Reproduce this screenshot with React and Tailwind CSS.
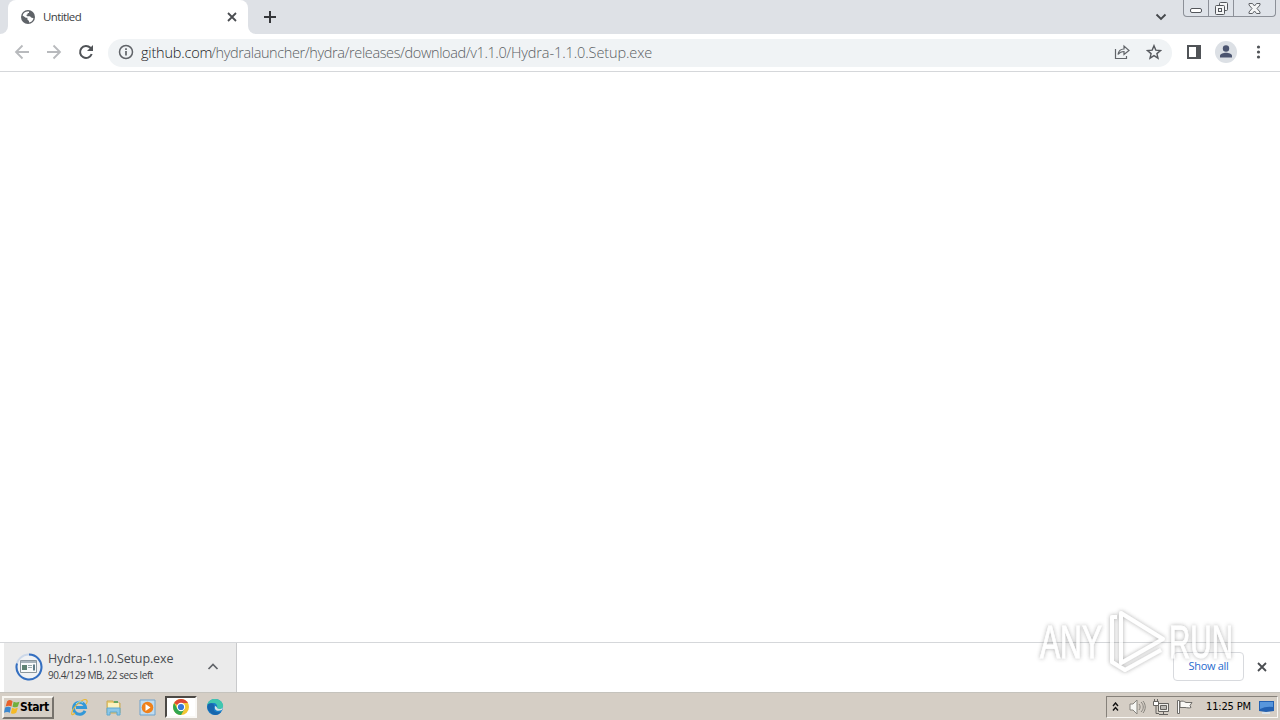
import React from "react";

const Globe = () => (
  <svg className="h-4 w-4" viewBox="0 0 16 16">
    <circle cx="8" cy="8" r="7" fill="#5f6368" />
    <path d="M9 2.600C6 2 3.300 3.800 2.600 6.400l3.200 2.400h1.600v1.700l1.600 1.600v1.400c2.300-.3 4.100-2 4.500-4.300l-2.400-.6-1.100-1.400H7.200L6.200 6l1.500-.8V4H9Z" fill="#fff" />
  </svg>
);

const Cross = () => (
  <svg className="h-3 w-3 shrink-0" viewBox="0 0 12 12" fill="none" stroke="#4a4d51" strokeWidth="1.8">
    <path d="m2 2 8 8M10 2l-8 8" />
  </svg>
);

function TabStrip() {
  return (
    <div className="flex h-[34px] bg-[#dee1e6]">
      <div className="w-2 bg-white"><div className="h-full rounded-br-lg bg-[#dee1e6]" /></div>
      <div className="flex w-[240px] items-center rounded-t-lg bg-white pr-[10px] pl-3">
        <Globe />
        <span className="ml-[7px] flex-1 text-[11.5px] tracking-[-0.6px] text-[#3c4043]">Untitled</span>
        <Cross />
      </div>
      <div className="w-2 bg-white"><div className="h-full rounded-bl-lg bg-[#dee1e6]" /></div>
      <svg className="mt-[11px] ml-2 h-3 w-3" viewBox="0 0 12 12" stroke="#35363a" strokeWidth="2"><path d="M6 0v12M0 6h12" /></svg>
      <svg className="mt-[13px] ml-auto h-2 w-3" viewBox="0 0 12 8" fill="none" stroke="#45484c" strokeWidth="1.9"><path d="m1.500 1.500 4.500 4.500 4.500-4.500" /></svg>
      <div className="mr-1 ml-4 flex h-[17px] w-[93px] rounded-b-[4px] border border-t-0 border-[#8c9098] bg-[#dfe3e9]">
        <div className="flex w-[25px] justify-center border-r border-[#8c9098] pt-2">
          <svg className="h-[5px] w-3" viewBox="0 0 12 5"><rect x=".5" y=".5" width="11" height="4" rx="1.500" fill="#fff" stroke="#53565b" /></svg>
        </div>
        <div className="flex w-[25px] justify-center border-r border-[#8c9098] pt-[2px]">
          <svg className="h-[13px] w-[13px]" viewBox="0 0 13 13" fill="#f4f5f6" stroke="#53565b">
            <rect x="4.500" y=".5" width="8" height="8" rx="1" /><rect x=".5" y="3.500" width="9" height="9" rx="1" /><rect x="3.500" y="6.500" width="3" height="3" />
          </svg>
        </div>
        <div className="flex flex-1 justify-center pt-[3px]">
          <svg className="h-[11px] w-[13px]" viewBox="0 0 13 11"><path d="M1 .5h3.500l2 2.500 2-2.500H12v1.500L9 5.500l3 3.500v1.500H8.500l-2-2.500-2 2.500H1V9l3-3.500L1 2Z" fill="#f4f5f6" stroke="#606368" /></svg>
        </div>
      </div>
    </div>
  );
}

function Toolbar() {
  return (
    <div className="flex h-[38px] items-center border-b border-[#d5d7da] bg-white pl-[14px]">
      <svg className="mb-[1px] h-4 w-4" viewBox="0 0 16 16" fill="none" stroke="#b8babd" strokeWidth="1.800"><path d="M15 8H2m6.500-6.500L2 8l6.500 6.500" /></svg>
      <svg className="mb-[1px] ml-4 h-4 w-4" viewBox="0 0 16 16" fill="none" stroke="#b8babd" strokeWidth="1.800"><path d="M1 8h13M7.500 1.500 14 8l-6.500 6.500" /></svg>
      <svg className="mb-[1px] ml-4 h-4 w-4" viewBox="0 0 16 16" fill="none" stroke="#505357" strokeWidth="2"><path d="M13.700 10A6 6 0 1 1 12.400 3.800L14 5.500" /><path d="M15 1v6H9l6-6Z" fill="#505357" stroke="none" /></svg>
      <div className="ml-[14px] flex h-7 w-[1064px] items-center rounded-full bg-[#f0f3f5] pr-[10px] pl-[10px]">
        <svg className="mb-[1px] h-4 w-4" viewBox="0 0 16 16" fill="none" stroke="#606368" strokeWidth="1.500"><circle cx="8" cy="8" r="6.500" /><path d="M8 7v4.500M8 4.300v1.700" strokeWidth="1.700" /></svg>
        <div className="ml-[7px] flex flex-1 font-light whitespace-nowrap text-[14.5px] text-[#5b5f64]">
          <span className="w-[70px] tracking-[-0.2px] text-[#202124]">github.com</span>
          <span className="tracking-[-0.39px]">/hydralauncher/hydra/releases/download/v1.1.0/</span>
          <span className="tracking-[-0.1px]">Hydra-1.1.0.Setup.exe</span>
        </div>
        <svg className="mb-[1px] h-4 w-4" viewBox="0 0 16 16" fill="none" stroke="#62656a" strokeWidth="1.200"><path d="M1.500 5v9.500h11V12M4 10.500C4.500 7 6.500 5 10 5V2l5 4.500-5 4v-3c-2.700 0-4.500 1-6 3Z" /></svg>
        <svg className="mb-[1px] ml-4 h-4 w-4" viewBox="0 0 16 16" fill="none" stroke="#56595e" strokeWidth="1.400"><path d="m8 1.700 1.800 4.400 4.700.4-3.600 3.100 1.100 4.600L8 11.700l-4 2.500 1.100-4.600-3.600-3.100 4.700-.4Z" /></svg>
      </div>
      <svg className="mb-[1px] ml-[15px] h-[14px] w-[14px]" viewBox="0 0 14 14"><path d="M1 1h12v12H1Z" fill="#fff" stroke="#505357" strokeWidth="2" /><path d="M9 1h4v12H9Z" fill="#505357" /></svg>
      <svg className="mb-[1px] ml-[14px] h-[22px] w-[22px]" viewBox="0 0 22 22"><circle cx="11" cy="11" r="11" fill="#dce0e5" /><circle cx="11" cy="7.500" r="3.200" fill="#4c5570" /><path d="M5 16.500v-1.800c0-2 3.500-3 6-3s6 1 6 3v1.800Z" fill="#4c5570" /></svg>
      <svg className="mb-[1px] ml-[19px] h-4 w-[5px]" viewBox="0 0 5 16" fill="#505357"><circle cx="2.500" cy="3" r="1.600" /><circle cx="2.500" cy="8" r="1.600" /><circle cx="2.500" cy="13" r="1.600" /></svg>
    </div>
  );
}

function DownloadShelf() {
  return (
    <div className="flex h-[50px] border-t border-[#d5d7da] bg-white pl-1">
      <div className="flex h-[49px] w-[233px] items-center border-r border-[#c9cacc] bg-[#ebebeb] pb-[1px] pl-[11px]">
        <svg className="h-7 w-7" viewBox="0 0 28 28">
          <circle cx="14" cy="14" r="12.500" fill="#f0f2f4" stroke="#ccd8e9" strokeWidth="2" />
          <path d="M14 1.500a12.500 12.500 0 1 1-12 9" fill="none" stroke="#346fc0" strokeWidth="2" />
          <path d="M5.500 7.500h16v12h-16Z" fill="#f8fafa" stroke="#8b979d" />
          <path d="M6 8h15v2H6Z" fill="#a9b5bb" /><path d="M7 12h5v5H7Z" fill="#5f8272" /><path d="M13 12.500h4M13 14.500h4" stroke="#9aa" /><path d="M18 11.500h2v6h-2Z" fill="#617e89" />
        </svg>
        <div className="ml-[5px] w-[150px] pb-[2px] whitespace-nowrap">
          <div className="text-[12.5px] leading-[17px] tracking-[-0.13px] text-[#4a4d51]">Hydra-1.1.0.Setup.exe</div>
          <div className="text-[10px] leading-4 tracking-[-0.42px] text-[#3f4246]">90.4/129 MB, 22 secs left</div>
        </div>
        <svg className="ml-[9px] h-2 w-3" viewBox="0 0 12 8" fill="none" stroke="#606368" strokeWidth="1.700"><path d="m1.500 6 4.500-4.500L10.500 6" /></svg>
      </div>
      <div className="mt-[9px] ml-auto flex h-[29px] w-[71px] items-center justify-center rounded-[4px] border border-[#d8dade] text-[11px] tracking-[-0.3px] whitespace-nowrap text-[#286bce]">Show all</div>
      <div className="mr-3 ml-3 flex items-center pb-[1px]"><Cross /></div>
    </div>
  );
}

function Watermark() {
  return (
    <svg className="pointer-events-none absolute top-[605px] left-[1034px] h-[76px] w-[206px] opacity-75" viewBox="0 0 206 76" fill="none">
      <defs><filter id="halo" x="-10%" y="-20%" width="120%" height="140%"><feDropShadow dx="0" dy="0" stdDeviation="2" floodColor="#777777" floodOpacity=".8" /></filter></defs>
      <g filter="url(#halo)" fill="#fff" stroke="#fff" strokeWidth=".8" fontFamily="Liberation Sans Narrow, Liberation Sans, sans-serif" fontSize="46">
        <text x="6" y="53" textLength="62" lengthAdjust="spacingAndGlyphs">ANY</text>
        <text x="135" y="53" textLength="64" lengthAdjust="spacingAndGlyphs">RUN</text>
      </g>
      <g filter="url(#halo)" stroke="#fff" strokeWidth="4" strokeLinejoin="round">
        <path d="M87 50V8l42 26-42 24V50" />
        <path d="M83 12h-5v45l13 8 36-20" />
      </g>
    </svg>
  );
}

function Taskbar() {
  return (
    <div className="flex h-7 items-center border-t border-[#c5c3bd] bg-[#d5cec5] pt-[1px]">
      <div className="ml-[2px] flex h-[23px] w-[52px] items-center border-2 border-t-[#f8f6f1] border-r-[#77736d] border-b-[#77736d] border-l-[#f8f6f1] pl-0">
        <svg className="h-4 w-4 shrink-0" viewBox="0 0 15 15"><path d="M3 2c2-1.500 3-1 5 0L7 7C5 6 4 6 1.500 7Z" fill="#e8612b" /><path d="M9 2.500c2 1 3 1 5.500 0L13 7c-2 1-3 1-5 .2Z" fill="#71af3d" /><path d="M1 8c2-1 4-1 5.500 0l-1 5C4 12 2 12 0 13Z" fill="#3c88cf" /><path d="M7.500 8.300c2 1 3 1 5.500 0L11.500 13c-2 1-3 1-5 .3Z" fill="#f5ba26" /></svg>
        <span className="font-['DejaVu_Sans_Condensed','DejaVu_Sans',sans-serif] text-[12px] font-bold tracking-[-0.4px] text-black">Start</span>
      </div>
      <svg className="ml-[17px] h-[17px] w-[17px]" viewBox="0 0 17 17" fill="none"><path d="M14 11.800A6 6 0 1 1 14.500 8.500H5" stroke="#3398d8" strokeWidth="3" /><path d="M4 14C0 18-.5 14 3 9S13-1 15.500 1c1.200 1 .5 3-.5 4" stroke="#e7b93a" strokeWidth="1.200" /><path d="M5 5c2-3 5-3 7-1" stroke="#9cddf5" /></svg>
      <svg className="ml-[17px] h-[17px] w-[17px]" viewBox="0 0 17 17"><path d="M2 2h6l1 2h6v10H2Z" fill="#efd277" stroke="#c9aa56" /><path d="M3 4h11v6H3Z" fill="#fbf2be" /><path d="M2 9h13v7h-3v-3H5v3H2Z" fill="#8cc7e7" stroke="#5ca8d1" /><path d="M9 3h4" stroke="#64a761" strokeWidth="2" /></svg>
      <svg className="ml-[17px] h-[17px] w-[17px]" viewBox="0 0 17 17"><path d="M1 1h15v15H1Z" fill="#c0dcf0" stroke="#6fa3cd" /><circle cx="8.500" cy="8.500" r="5.800" fill="#ef811b" /><path d="m6.500 5 5 3.500-5 3.500Z" fill="#fff" /></svg>
      <div className="ml-[9px] flex h-[22px] w-[32px] items-center justify-center border-2 border-t-[#4c4945] border-r-[#faf8f5] border-b-[#faf8f5] border-l-[#4c4945] bg-white">
        <svg className="h-4 w-4" viewBox="0 0 16 16"><circle cx="8" cy="8" r="8" fill="#f3c633" /><path d="M8 8 1.100 4A8 8 0 0 1 15 4H8Z" fill="#df4936" /><path d="M1.100 4A8 8 0 0 0 8 16l3.500-6L8 8 4.500 10Z" fill="#31a650" /><circle cx="8" cy="8" r="4.200" fill="#fff" /><circle cx="8" cy="8" r="3.100" fill="#3878d8" /></svg>
      </div>
      <svg className="ml-[9px] h-[18px] w-[18px]" viewBox="0 0 18 18"><circle cx="9" cy="9" r="8" fill="#197ec8" /><path d="M1 8C2 2 6 1 9 1c6 0 9 5 8 8-1 2-4 3-6 1 1-3-1-5-4-5C4 5 2 6 1 8Z" fill="#40c7af" /><path d="M2 6c5-2 7 1 6 4-1 4 3 5 7 4-3 4-8 4-11 0-3-3-3-5-2-8Z" fill="#1766ad" /><path d="M9 8c-1 4 2 6 7 4l1-3c-1 2-4 3-6 1 0-1-1-2-2-2Z" fill="#d5e4e6" /></svg>
      <div className="mr-[2px] ml-auto flex h-[22px] w-[172px] items-center border border-t-[#86817a] border-r-[#f9f7f3] border-b-[#f9f7f3] border-l-[#86817a] pl-[5px]">
        <svg className="h-[10px] w-[7px]" viewBox="0 0 7 10" fill="none" stroke="#111" strokeWidth="1.400"><path d="m1 4 2.500-3L6 4M1 8.500l2.500-3 2.500 3" /></svg>
        <svg className="ml-[10px] h-4 w-[17px]" viewBox="0 0 17 16" fill="none" stroke="#87847e"><path d="M1 5h3l4-4v14l-4-4H1Z" fill="#f7f7f4" /><path d="M10 5c1.500 2 1.500 4 0 6M12 3c3 3 3 7 0 10M14 2c3 4 3 8 0 12" /></svg>
        <svg className="ml-[7px] h-[17px] w-[17px]" viewBox="0 0 17 17" stroke="#65635f"><path d="M5.500 4.500h10v8h-10Z" fill="#efeeea" /><path d="M7.500 6.500h6v4h-6Z" fill="#bcbab5" /><path d="M10.500 13v2M6 15.500h9" /><path d="M.5 2.500h5v4h-5Z" fill="#fff" /><path d="M1.500 0v3M4.500 0v3M3 7v7.500h3" fill="none" /></svg>
        <svg className="ml-[7px] h-4 w-4" viewBox="0 0 16 16" stroke="#6f6d69"><path d="M.5 1.500h2v13h-2Z" fill="#fff" /><path d="M3 2.500C6 1.500 7 2.500 9 3.500h6l-2 3 1 2c-2 1-4 0-6 0H3Z" fill="#faf9f6" /></svg>
        <span className="ml-[13px] w-[46px] pt-[1px] font-['DejaVu_Sans_Condensed','DejaVu_Sans',sans-serif] text-[11px] tracking-[-0.15px] whitespace-nowrap text-black">11:25 PM</span>
        <svg className="ml-[7px] h-[14px] w-4" viewBox="0 0 16 14"><path d="M0 1h15v10l-8 1-7-1Z" fill="#2361b2" /><path d="M1 2h13v5Q7 6 1 9Z" fill="#5796dc" /><path d="M3 13h8" stroke="#d9e1e8" strokeWidth="2" /></svg>
      </div>
    </div>
  );
}

export default function App() {
  return (
    <main className="relative flex h-[720px] w-[1280px] flex-col overflow-hidden bg-white font-['Open_Sans','Noto_Sans',sans-serif]">
      <TabStrip />
      <Toolbar />
      <div className="flex-1 bg-white" />
      <DownloadShelf />
      <Taskbar />
      <Watermark />
    </main>
  );
}
